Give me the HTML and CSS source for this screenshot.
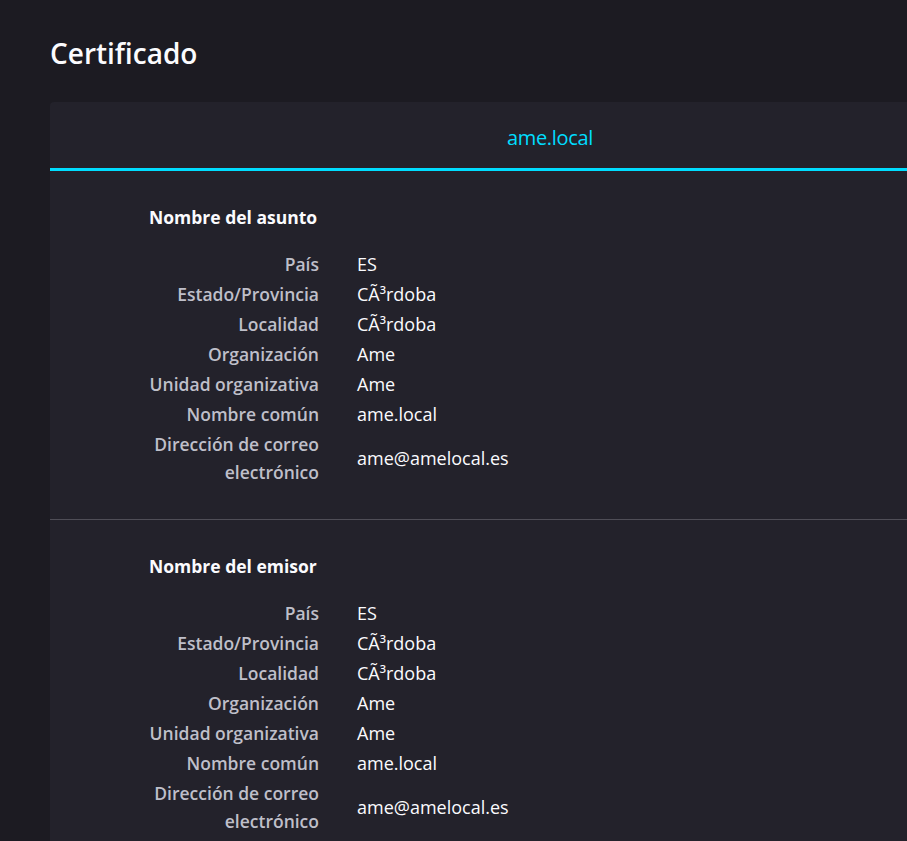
FILE: index.html
```html
<!DOCTYPE html>
<html lang="es">
<head>
<meta charset="utf-8">
<title>Certificado</title>
<link rel="stylesheet" href="styles.css">
</head>
<body>
<main class="page">
  <h1 class="title">Certificado</h1>
  <section class="card">
    <div class="tabs">
      <div class="tab tab-active">ame.local</div>
    </div>
    <div class="section">
      <h2 class="section-title">Nombre del asunto</h2>
      <div class="rows">
        <div class="label">País</div><div class="value">ES</div>
        <div class="label">Estado/Provincia</div><div class="value">CÃ³rdoba</div>
        <div class="label">Localidad</div><div class="value">CÃ³rdoba</div>
        <div class="label">Organización</div><div class="value">Ame</div>
        <div class="label">Unidad organizativa</div><div class="value">Ame</div>
        <div class="label">Nombre común</div><div class="value">ame.local</div>
        <div class="label">Dirección de correo electrónico</div><div class="value">ame@amelocal.es</div>
      </div>
    </div>
    <div class="section">
      <h2 class="section-title">Nombre del emisor</h2>
      <div class="rows">
        <div class="label">País</div><div class="value">ES</div>
        <div class="label">Estado/Provincia</div><div class="value">CÃ³rdoba</div>
        <div class="label">Localidad</div><div class="value">CÃ³rdoba</div>
        <div class="label">Organización</div><div class="value">Ame</div>
        <div class="label">Unidad organizativa</div><div class="value">Ame</div>
        <div class="label">Nombre común</div><div class="value">ame.local</div>
        <div class="label">Dirección de correo electrónico</div><div class="value">ame@amelocal.es</div>
      </div>
    </div>
  </section>
</main>
</body>
</html>
```

FILE: styles.css
```css
html {
  background: #1c1b22;
  overflow: hidden;
}
body {
  margin: 0;
  font-family: "Open Sans", "Noto Sans", sans-serif;
  color: #fbfbfe;
}
.page {
  padding: 33px 50px 0 50px;
}
.title {
  margin: 0 0 29px 0;
  font-size: 28px;
  font-weight: 600;
  line-height: 40px;
  color: #fbfbfe;
}
.card {
  width: 1000px;
  background: #23222b;
  border-radius: 4px;
}
.tabs {
  display: flex;
  justify-content: center;
  border-bottom: 3px solid #00ddff;
}
.tab {
  box-sizing: border-box;
  height: 66px;
  padding-top: 4px;
  display: flex;
  align-items: center;
  font-size: 20px;
  letter-spacing: -0.3px;
}
.tab-active {
  color: #00ddff;
}
.section {
  padding: 34px 0 33px 99px;
  border-bottom: 1px solid #4f4e57;
}
.section-title {
  margin: 0 0 21px 0;
  font-size: 17.5px;
  font-weight: 700;
  line-height: 24px;
}
.rows {
  display: grid;
  grid-template-columns: 170px auto;
  column-gap: 38px;
  row-gap: 2px;
  align-items: center;
  line-height: 28px;
}
.label {
  text-align: right;
  font-size: 17.5px;
  font-weight: 600;
  color: #bfbfc9;
}
.value {
  font-size: 18px;
  color: #fbfbfe;
}
```
